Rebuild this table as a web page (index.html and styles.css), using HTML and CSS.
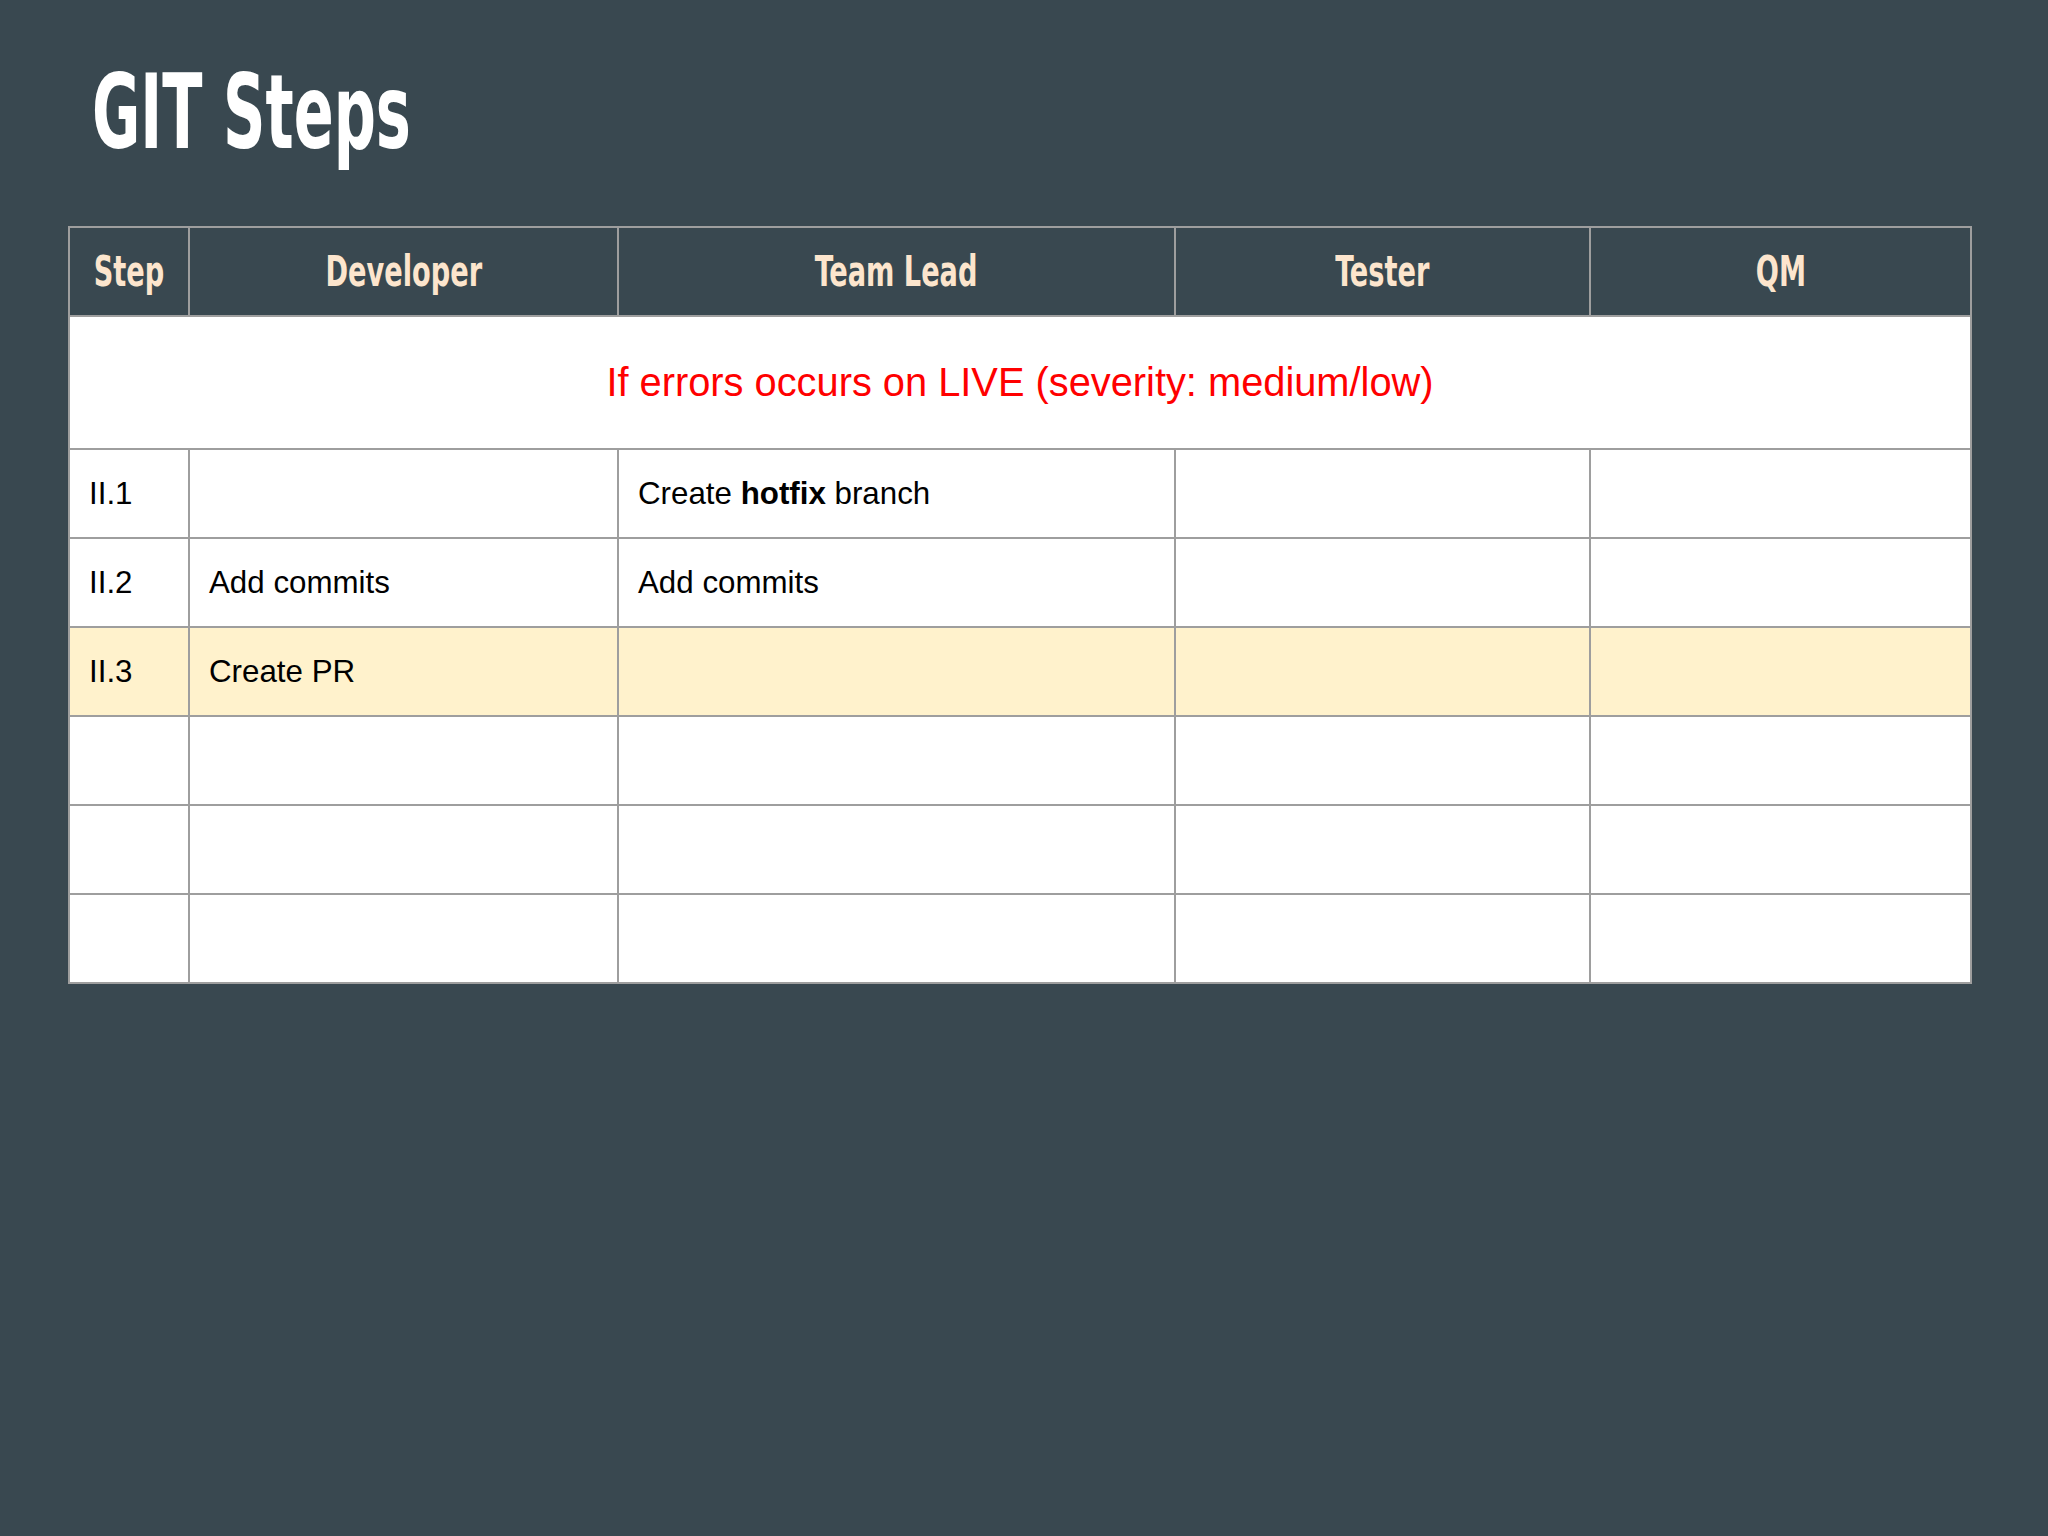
FILE: index.html
```html
<!DOCTYPE html>
<html>
<head>
<meta charset="utf-8">
<link rel="stylesheet" href="styles.css">
</head>
<body>
<div class="slide">
  <h1 class="title"><span class="title-text">GIT Steps</span></h1>
  <table class="steps">
    <colgroup>
      <col class="c-step">
      <col class="c-dev">
      <col class="c-lead">
      <col class="c-test">
      <col class="c-qm">
    </colgroup>
    <thead>
      <tr class="head">
        <th><span class="hd">Step</span></th>
        <th><span class="hd">Developer</span></th>
        <th><span class="hd">Team Lead</span></th>
        <th><span class="hd">Tester</span></th>
        <th><span class="hd">QM</span></th>
      </tr>
    </thead>
    <tbody>
      <tr class="section">
        <td colspan="5">If errors occurs on LIVE (severity: medium/low)</td>
      </tr>
      <tr>
        <td>II.1</td>
        <td></td>
        <td>Create <b>hotfix</b> branch</td>
        <td></td>
        <td></td>
      </tr>
      <tr>
        <td>II.2</td>
        <td>Add commits</td>
        <td>Add commits</td>
        <td></td>
        <td></td>
      </tr>
      <tr class="hl">
        <td>II.3</td>
        <td>Create PR</td>
        <td></td>
        <td></td>
        <td></td>
      </tr>
      <tr><td></td><td></td><td></td><td></td><td></td></tr>
      <tr><td></td><td></td><td></td><td></td><td></td></tr>
      <tr><td></td><td></td><td></td><td></td><td></td></tr>
    </tbody>
  </table>
</div>
</body>
</html>
```
FILE: styles.css
```css
html, body {
  margin: 0;
  padding: 0;
}
body {
  background: #394850;
  width: 2048px;
  height: 1536px;
  overflow: hidden;
}
.slide {
  padding: 60px 0 0 68px;
}
.title {
  margin: 0 0 62px 0;
  padding-left: 24px;
  height: 104px;
  font-family: "DejaVu Sans Condensed", "DejaVu Sans", sans-serif;
  font-stretch: condensed;
  font-weight: bold;
  font-size: 104px;
  line-height: 104px;
  color: #ffffff;
}
.title-text {
  display: inline-block;
  transform: scaleX(0.63);
  transform-origin: left center;
}
.steps {
  border-collapse: collapse;
  table-layout: fixed;
  width: 1902px;
}
.c-step { width: 120px; }
.c-dev { width: 429px; }
.c-lead { width: 557px; }
.c-test { width: 415px; }
.c-qm { width: 381px; }
.steps th, .steps td {
  border: 2px solid #9e9e9e;
  padding: 0 0 0 19px;
  vertical-align: middle;
}
.head th {
  height: 87px;
  padding: 0;
  text-align: center;
  font-family: "DejaVu Sans Condensed", "DejaVu Sans", sans-serif;
  font-stretch: condensed;
  font-weight: bold;
  font-size: 42px;
  color: #fce5cd;
  background: #394850;
  white-space: nowrap;
}
.hd {
  display: inline-block;
  transform: scaleX(0.72);
  transform-origin: center center;
}
.steps td {
  height: 87px;
  background: #ffffff;
  font-family: "Liberation Sans", Arial, sans-serif;
  font-size: 31.3px;
  color: #000000;
}
.section td {
  height: 131px;
  padding: 0;
  text-align: center;
  color: #ff0000;
  font-size: 39.8px;
}
.hl td {
  background: #fff2cc;
}
```
